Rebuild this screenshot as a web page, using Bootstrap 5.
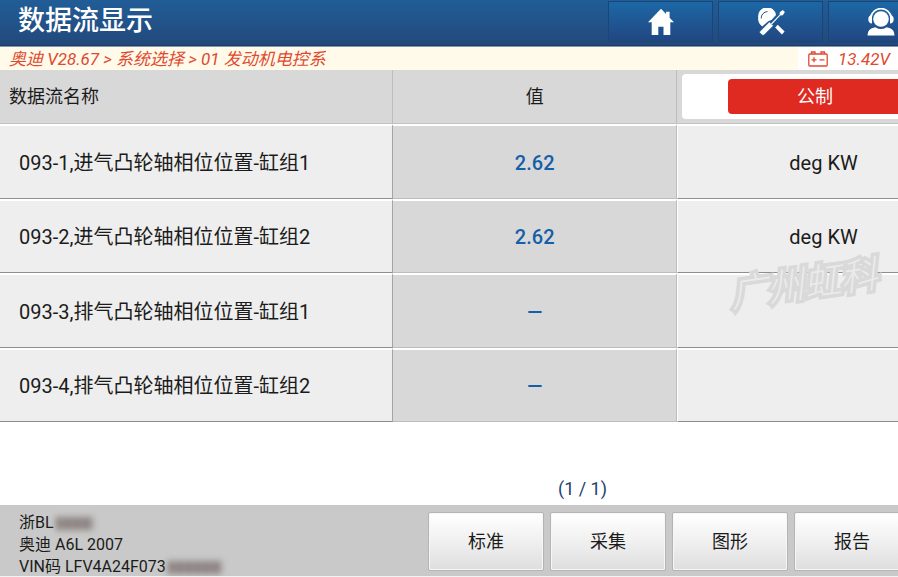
<!DOCTYPE html>
<html lang="zh-CN">
<head>
<meta charset="utf-8">
<meta name="viewport" content="width=device-width, initial-scale=1">
<title>数据流显示</title>
<link href="https://cdn.jsdelivr.net/npm/bootstrap@5.3.0/dist/css/bootstrap.min.css" rel="stylesheet">
<style>
  body { font-family: Roboto, "Noto Sans CJK SC", sans-serif; color: #1b1b1b; background: #fff; overflow-x: hidden; }
  .top-bar { height: 47px; background: linear-gradient(#215d97, #23487a); border-bottom: 1px solid #8296b0; box-shadow: inset 0 -1px #1b3b69; }
  .top-title { font-size: 27px; line-height: 43px; font-weight: 500; color: #fff; padding-left: 18px; }
  .top-nav { width: 290px; gap: 5px; padding-top: 1px; }
  .top-btn { width: 105px; height: 41px; border: 1px solid #1b4577; border-radius: 1px; background: linear-gradient(#1d67a6, #214781); color: #fff; }
  .top-btn:hover { color: #fff; filter: brightness(1.1); }
  .path-bar { height: 23px; background: #fffaea; color: #e0492f; font-size: 17px; line-height: 24px; font-style: italic; }
  .path-text { width: 317px; margin-left: 9px; color: inherit; }
  .volt { padding: 0 8px 0 10px; background: #fff; gap: 10px; }
  .flow-table { height: 352px; table-layout: fixed; border-collapse: separate; border-spacing: 0; font-size: 20px; line-height: 28px; }
  .col-name { width: 43.8%; }
  .col-value { width: 31.6%; }
  .flow-table th { height: 54px; padding: 0 9px; font-size: 18px; font-weight: 400; background: #d9d8d8; border-right: 1px solid #bdbdbd; border-bottom: 1px solid #c3c1c1; }
  .flow-table td { padding: 2px 0 0; background: #eee; border-top: 2px solid #fff; border-bottom: 1px solid #8e8e8e; }
  .flow-table .cell-name { padding-left: 19px; border-right: 1px solid #a5a5a5; }
  .flow-table .cell-value { background: #d9d8d8; color: #145fa8; font-weight: 500; border-right: 1px solid #bcbcbc; border-bottom-color: #bdbdbd; }
  .flow-table .cell-unit { padding-left: 71px; border-left: 1px solid #fff; }
  .flow-table .head-unit { padding: 0 0 0 5px; border-right: 0; }
  .unit-switch { height: 45px; padding: 5px 0 5px 46px; background: #fff; border-radius: 4px 0 0 4px; }
  .unit-on { height: 35px; padding: 0 0 0 4px; background: #df2a22; color: #fff; font-size: 18px; line-height: 35px; border: 0; border-radius: 4px 0 0 4px; }
  .stamp { right: 20px; top: 188px; font-size: 37px; line-height: 54px; font-weight: 300; font-style: italic; color: #ebebeb; -webkit-text-stroke: 7px #d9d9d9; stroke-linejoin: round; paint-order: stroke fill; transform: rotate(-8deg); pointer-events: none; }
  .pager { color: #1d4173; font-size: 18px; line-height: 24px; padding: 0 0 4px 267px; }
  .foot-bar { height: 72px; background: #c8c9c8; border-bottom: 1px solid #f2f2f2; }
  .car-info { font-size: 16px; line-height: 22px; padding: 7px 0 0 19px; }
  .smudge { display: inline-block; height: 13px; width: 37px; margin-left: 2px; vertical-align: -2px; filter: blur(3px); background: repeating-linear-gradient(90deg, #857c7a 0 6px, #a39c9b 6px 9px); }
  .smudge-wide { width: 54px; }
  .foot-actions { width: 470px; gap: 6px; padding-top: 7px; }
  .foot-btn { width: 116px; height: 59px; border: 1px solid #b4b4b4; border-radius: 2px; background: linear-gradient(#fff, #f0f0f0 50%, #dedede); box-shadow: inset 0 0 0 1px #f7f7f7; color: #1b1b1b; font-size: 18px; }
</style>
</head>
<body>
<div class="d-flex flex-column min-vh-100">
  <header class="top-bar d-flex">
    <h1 class="top-title flex-grow-1 m-0">数据流显示</h1>
    <nav class="top-nav d-flex overflow-hidden flex-shrink-0" aria-label="工具">
      <button type="button" class="top-btn btn rounded-0 p-0 flex-shrink-0 d-flex align-items-center justify-content-center" aria-label="主页">
        <svg width="28" height="28" viewBox="0 0 28 28" fill="currentColor"><path d="M14 .8 1 14.300h3.700V27h6.600v-8.200h5.200V27h6.800V14.300H27L22.600 9.700V3.800h-3.500v2.300z"/></svg>
      </button>
      <button type="button" class="top-btn btn rounded-0 p-0 flex-shrink-0 d-flex align-items-center justify-content-center" aria-label="诊断">
        <svg width="28" height="28" viewBox="0 0 28 28" fill="currentColor"><path d="M1.200 9.500A8.900 8.900 0 0 1 19 7l-4.500 5-3.300 1.200-6 5.200A9.500 9.500 0 0 1 1.200 9.500z"/><path d="M4.200 10.500A6.500 6.500 0 0 1 10.500 3.600" fill="none" stroke="#205991" stroke-width="1"/><path d="m3 23.300 9.400-9.500 4 4-9.200 9.200q-1.200.8-2.400-.2L3 25.200q-.9-1 0-1.900z" stroke="#205991" stroke-width=".8"/><path d="m14 15.400 8.600-8.700.2-2.500 2.900-2.300 2.200 2.200-2.100 3.200-2.500.3-8.500 8.900z"/><path d="m18.200 19.500 2.500-2.700 6.900 6.700-2.700 3z"/></svg>
      </button>
      <button type="button" class="top-btn btn rounded-0 p-0 flex-shrink-0 d-flex align-items-center justify-content-center" aria-label="客服">
        <svg width="28" height="28" viewBox="0 0 28 28" fill="currentColor"><circle cx="14" cy="11" r="7.800"/><path d="M3.800 9.500a10.300 10.300 0 0 1 20.400 0" fill="none" stroke="currentColor" stroke-width="1.800"/><path d="M5 6.800v8.800Q1.300 15 1.300 11.200T5 6.800zM23 6.800v8.800q3.700-.6 3.700-4.400T23 6.800z"/><path d="M.5 27.500q-.4-7 7.900-8.300 5.600 3.800 11.200 0 8.300 1.300 7.900 8.300z"/></svg>
      </button>
    </nav>
  </header>

  <div class="path-bar d-flex justify-content-between">
    <a href="#" class="path-text text-decoration-none text-nowrap overflow-hidden">奥迪 V28.67 &gt; 系统选择 &gt; 01 发动机电控系统</a>
    <div class="volt d-flex align-items-center">
      <svg width="20" height="16" viewBox="0 0 20 16" fill="none" stroke="currentColor" stroke-width="1.300"><rect x=".8" y="3" width="18.400" height="12" rx="1"/><path d="M3.500 3V1h3.500v2M13 3V1h3.500v2M3.500 8.800h5M6 6.300v5M11.500 8.800h5"/></svg>
      <span>13.42V</span>
    </div>
  </div>

  <main class="position-relative">
    <table class="flow-table w-100">
      <colgroup><col class="col-name"><col class="col-value"><col></colgroup>
      <thead>
        <tr>
          <th scope="col">数据流名称</th>
          <th scope="col" class="text-center">值</th>
          <th scope="col" class="head-unit"><div class="unit-switch"><button type="button" class="unit-on d-block w-100 text-center">公制</button></div></th>
        </tr>
      </thead>
      <tbody>
        <tr><td class="cell-name">093-1,进气凸轮轴相位位置-缸组1</td><td class="cell-value text-center">2.62</td><td class="cell-unit text-center">deg KW</td></tr>
        <tr><td class="cell-name">093-2,进气凸轮轴相位位置-缸组2</td><td class="cell-value text-center">2.62</td><td class="cell-unit text-center">deg KW</td></tr>
        <tr><td class="cell-name">093-3,排气凸轮轴相位位置-缸组1</td><td class="cell-value text-center">—</td><td class="cell-unit"></td></tr>
        <tr><td class="cell-name">093-4,排气凸轮轴相位位置-缸组2</td><td class="cell-value text-center">—</td><td class="cell-unit"></td></tr>
      </tbody>
    </table>
    <div class="stamp position-absolute text-nowrap">广州虹科</div>
  </main>

  <div class="pager flex-grow-1 d-flex align-items-end justify-content-center">(1 / 1)</div>

  <footer class="foot-bar d-flex justify-content-between overflow-hidden">
    <div class="car-info text-nowrap">
      <div>浙BL<span class="smudge"></span></div>
      <div>奥迪 A6L 2007</div>
      <div>VIN码 LFV4A24F073<span class="smudge smudge-wide"></span></div>
    </div>
    <div class="foot-actions d-flex overflow-hidden flex-shrink-0">
      <button type="button" class="foot-btn flex-shrink-0">标准</button>
      <button type="button" class="foot-btn flex-shrink-0">采集</button>
      <button type="button" class="foot-btn flex-shrink-0">图形</button>
      <button type="button" class="foot-btn flex-shrink-0">报告</button>
    </div>
  </footer>
</div>
<script src="https://cdn.jsdelivr.net/npm/bootstrap@5.3.0/dist/js/bootstrap.bundle.min.js"></script>
</body>
</html>
